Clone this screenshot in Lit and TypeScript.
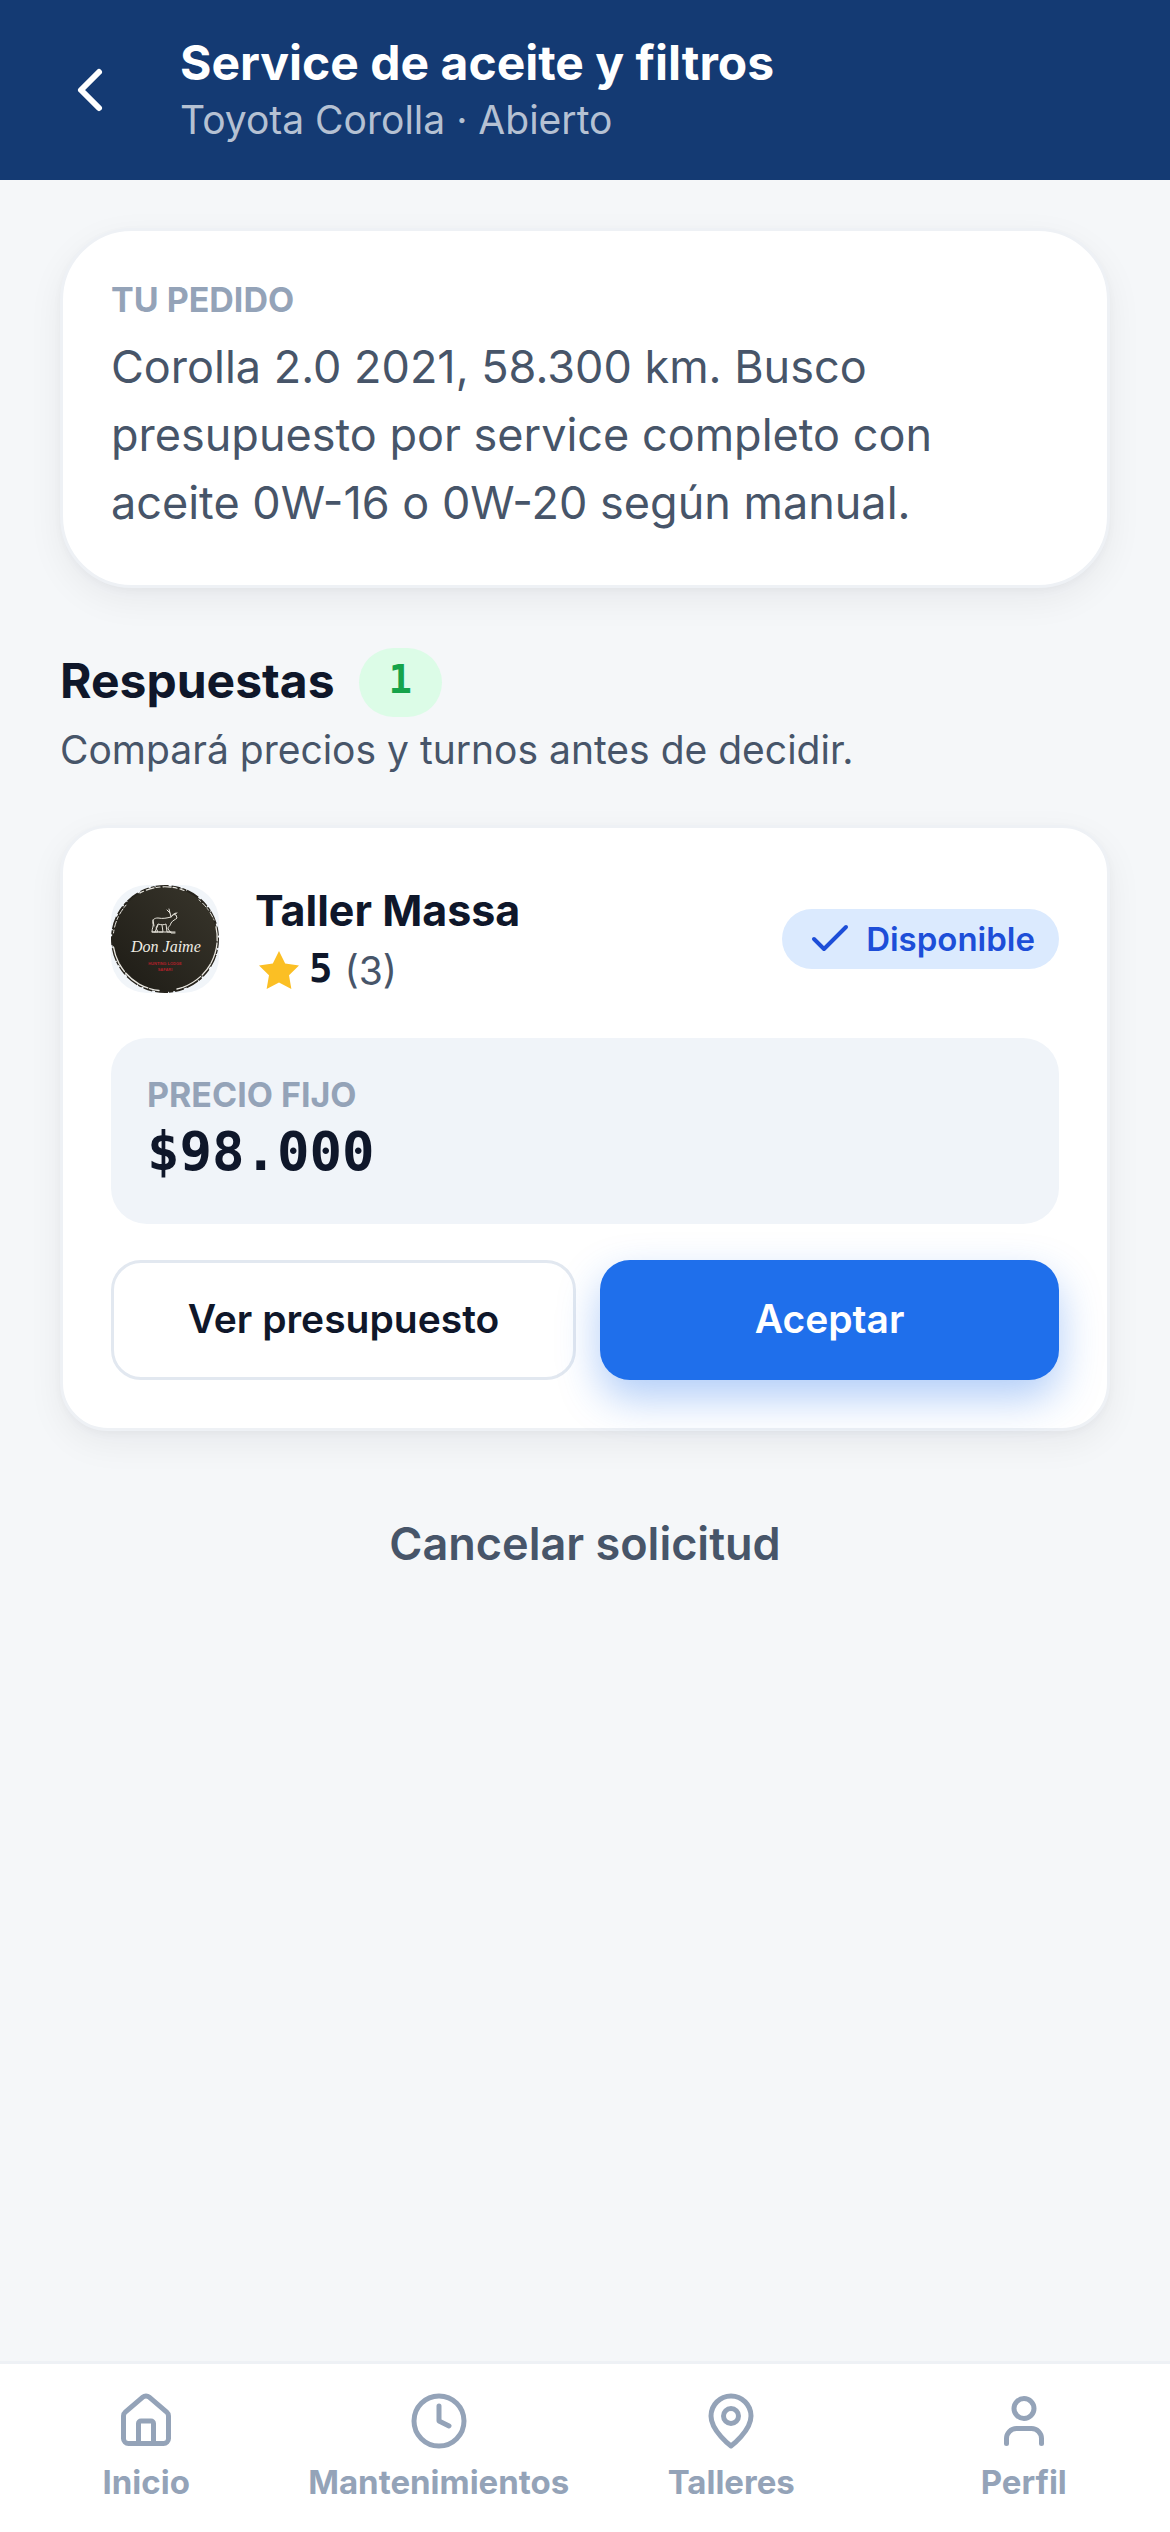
import { LitElement, html, css, svg } from "lit";
import { customElement } from "lit/decorators.js";

const ICONS = {
  back: svg`<path d="M15 6l-6 6 6 6"/>`,
  check: svg`<path d="M20 6L9 17l-5-5"/>`,
  home: svg`<path d="M15 21v-8a1 1 0 0 0-1-1h-4a1 1 0 0 0-1 1v8"/><path d="M3 10a2 2 0 0 1 .709-1.528l7-5.999a2 2 0 0 1 2.582 0l7 5.999A2 2 0 0 1 21 10v9a2 2 0 0 1-2 2H5a2 2 0 0 1-2-2z"/>`,
  clock: svg`<circle cx="12" cy="12" r="10"/><path d="M12 6v6l4 2"/>`,
  pin: svg`<path d="M20 10c0 6-8 12-8 12s-8-6-8-12a8 8 0 0 1 16 0Z"/><circle cx="12" cy="10" r="3"/>`,
  user: svg`<path d="M19 21v-2a4 4 0 0 0-4-4H9a4 4 0 0 0-4 4v2"/><circle cx="12" cy="7" r="4"/>`,
  star: svg`<path d="M12 2l3.090 6.260L22 9.270l-5 4.870 1.180 6.880L12 17.770l-6.180 3.250L7 14.140 2 9.270l6.910-1.010z"/>`,
};

const TABS = [
  { label: "Inicio", icon: ICONS.home },
  { label: "Mantenimientos", icon: ICONS.clock },
  { label: "Talleres", icon: ICONS.pin },
  { label: "Perfil", icon: ICONS.user },
];

const icon = (name: string, content: unknown) =>
  html`<svg class="icon ${name}" viewBox="0 0 24 24" aria-hidden="true">${content}</svg>`;

@customElement("workshop-logo")
class WorkshopLogo extends LitElement {
  static styles = css`
    :host {
      display: block;
      flex: none;
      width: 108px;
      height: 108px;
      border-radius: 36px;
      overflow: hidden;
      background: #f1f5f9;
    }
    .art {
      display: block;
      width: 100%;
      height: 100%;
    }
    .script {
      font: italic 16px "Liberation Serif", serif;
      fill: #efece4;
    }
    .tag {
      font: bold 4px "Liberation Sans", sans-serif;
      fill: #b3202a;
    }
  `;

  render() {
    return html`<svg class="art" viewBox="0 0 108 108" role="img" aria-label="Don Jaime">
      <defs>
        <linearGradient id="disc" x1="0" y1="1" x2="1" y2="0">
          <stop offset="0" stop-color="#1d1b15" />
          <stop offset="1" stop-color="#39362c" />
        </linearGradient>
      </defs>
      <circle cx="54" cy="54" r="53" fill="url(#disc)" />
      <g fill="none" stroke="#26231c" stroke-width="2">
        <circle cx="54" cy="54" r="53" stroke-dasharray="9 2 4 1 13 3" />
      </g>
      <g fill="none" stroke="#e9e7e0" stroke-linecap="round">
        <path d="M2.500 62A52 52 0 0 0 48 105.500" stroke-width="1.400" stroke-dasharray="17 1 9 2" />
        <path d="M105 42A52 52 0 0 1 66 104" stroke-width="1.300" stroke-dasharray="14 2 21 1" />
        <path d="M29 8A52 52 0 0 1 73 5.500" stroke-width="1.200" stroke-dasharray="4 3 8 2" />
        <path d="M2.500 48A52 52 0 0 1 17 18" stroke-width="1" stroke-dasharray="3 3 6 2" />
        <path d="M88 15A52 52 0 0 1 103 35" stroke-width="1" stroke-dasharray="2 3 5 2" />
      </g>
      <g fill="none" stroke="#e6e3da" stroke-width="1" stroke-linecap="round" stroke-linejoin="round">
        <path d="M42 38c-1-3 1-5 5-5 5 1 9 0 13-1 1-2 3-3 5-2l1 3c-2 2-4 2-6 5-1 4-3 3-3 6l3 4h4M42 38c1 3-1 5-1 9h6l-2-4 2-4c3 1 6 1 8 0l1 8h4M42 35l1 6M47 40l-3 7M51 40l1 7h-4M41 47h23" />
        <path d="M60 32l-1-4-3-3M59 28l-1-4M61 31c1-3 3-1 5-3M63 29l2-1" />
      </g>
      <text class="script" x="20" y="67">Don Jaime</text>
      <text class="tag" x="54" y="80" text-anchor="middle">HUNTING LODGE</text>
      <text class="tag" x="54" y="86" text-anchor="middle">SAFARI</text>
    </svg>`;
  }
}

@customElement("app-root")
class AppRoot extends LitElement {
  static styles = css`
    :host {
      display: flex;
      flex-direction: column;
      min-height: 100vh;
      background: #f5f7f9;
      color: #0f172a;
      font-family: Inter, "Liberation Sans", sans-serif;
    }
    h1, h2, h3, p {
      margin: 0;
    }
    button {
      box-sizing: content-box;
      margin: 0;
      border: 0;
      padding: 0;
      background: none;
      color: inherit;
      font: inherit;
      cursor: pointer;
    }
    .icon {
      display: block;
      flex: none;
      fill: none;
      stroke: currentColor;
      stroke-width: 2;
      stroke-linecap: round;
      stroke-linejoin: round;
    }
    .header {
      display: flex;
      align-items: center;
      gap: 24px;
      padding: 33px 24px;
      background: #143a73;
      color: #fff;
    }
    .back {
      display: grid;
      place-items: center;
      width: 132px;
      height: 114px;
    }
    .icon-back {
      width: 72px;
      height: 72px;
    }
    .title {
      font-size: 48px;
      line-height: 60px;
      font-weight: 700;
    }
    .subtitle {
      font-size: 39px;
      line-height: 54px;
      color: rgba(255, 255, 255, 0.7);
    }
    .content {
      flex: 1;
      padding: 48px 60px;
    }
    .card {
      border: 3px solid #eef1f5;
      padding: 48px;
      background: #fff;
      box-shadow: 0 3px 9px rgba(15, 23, 42, 0.03), 0 12px 36px rgba(15, 23, 42, 0.06);
    }
    .request {
      border-radius: 72px;
    }
    .label {
      font-size: 34px;
      line-height: 42px;
      font-weight: 700;
      color: #94a3b8;
    }
    .request-text {
      margin-top: 12px;
      font-size: 45px;
      line-height: 68px;
      color: #475569;
    }
    .section-head {
      display: flex;
      align-items: center;
      gap: 24px;
      margin-top: 60px;
    }
    .section-title {
      padding-bottom: 3px;
      font-size: 48px;
      line-height: 60px;
      font-weight: 700;
    }
    .mono {
      font-family: "DejaVu Sans Mono", "Liberation Mono", monospace;
      font-weight: 700;
    }
    .count {
      padding: 0 30px 6px;
      border-radius: 36px;
      background: #dcfce7;
      color: #16a34a;
      font-size: 39px;
      line-height: 63px;
    }
    .hint {
      margin-top: 3px;
      font-size: 39px;
      line-height: 60px;
      color: #475569;
    }
    .offer {
      margin-top: 45px;
      border-radius: 48px;
    }
    .workshop {
      display: flex;
      align-items: center;
      gap: 36px;
    }
    .workshop-info {
      flex: 1;
      min-width: 0;
      padding-bottom: 6px;
    }
    .workshop-name {
      font-size: 43px;
      line-height: 69px;
      font-weight: 700;
    }
    .rating {
      display: flex;
      align-items: center;
      gap: 6px;
      font-size: 39px;
      line-height: 48px;
    }
    .icon-star {
      width: 48px;
      height: 48px;
      fill: #fbbf24;
      stroke: none;
    }
    .score {
      padding-bottom: 3px;
    }
    .reviews {
      margin-left: 6px;
      color: #475569;
    }
    .status {
      display: flex;
      align-items: center;
      gap: 12px;
      padding: 0 24px;
      border-radius: 30px;
      background: #dbeafe;
      color: #1d4ed8;
      font-size: 33px;
      line-height: 60px;
      font-weight: 600;
    }
    .icon-check {
      width: 48px;
      height: 48px;
    }
    .price {
      margin-top: 36px;
      padding: 36px;
      border-radius: 36px;
      background: #f0f4f9;
    }
    .amount {
      font-size: 54px;
      line-height: 72px;
    }
    .actions {
      display: flex;
      gap: 24px;
      margin-top: 36px;
    }
    .action {
      flex: 1;
      padding-bottom: 3px;
      border-radius: 30px;
      font-size: 39px;
      line-height: 117px;
      font-weight: 600;
    }
    .action-outline {
      border: 3px solid #e2e8f0;
      line-height: 111px;
    }
    .action-primary {
      background: #1f6feb;
      color: #fff;
      box-shadow: 0 18px 42px rgba(31, 111, 235, 0.35);
    }
    .cancel {
      display: block;
      width: 100%;
      margin-top: 36px;
      color: #475569;
      font-size: 45px;
      line-height: 153px;
      font-weight: 600;
    }
    .tabs {
      display: grid;
      grid-template-columns: repeat(4, 1fr);
      padding: 27px 0 24px;
      border-top: 3px solid #eef1f5;
      background: #fff;
    }
    .tab {
      display: flex;
      flex-direction: column;
      align-items: center;
      gap: 6px;
      color: #94a3b8;
      font-size: 33px;
      line-height: 51px;
      font-weight: 700;
      text-decoration: none;
    }
    .icon-tab {
      width: 60px;
      height: 60px;
    }
  `;

  render() {
    return html`
      <header class="header">
        <button class="back" aria-label="Volver">${icon("icon-back", ICONS.back)}</button>
        <div>
          <h1 class="title">Service de aceite y filtros</h1>
          <p class="subtitle">Toyota Corolla · Abierto</p>
        </div>
      </header>

      <main class="content">
        <section class="card request">
          <h2 class="label">TU PEDIDO</h2>
          <p class="request-text">
            Corolla 2.0 2021, 58.300 km. Busco presupuesto por service completo con aceite 0W-16 o
            0W-20 según manual.
          </p>
        </section>

        <div class="section-head">
          <h2 class="section-title">Respuestas</h2>
          <span class="count mono">1</span>
        </div>
        <p class="hint">Compará precios y turnos antes de decidir.</p>

        <article class="card offer">
          <div class="workshop">
            <workshop-logo></workshop-logo>
            <div class="workshop-info">
              <h3 class="workshop-name">Taller Massa</h3>
              <div class="rating">
                ${icon("icon-star", ICONS.star)}
                <span class="score mono">5</span>
                <span class="reviews">(3)</span>
              </div>
            </div>
            <span class="status">${icon("icon-check", ICONS.check)}Disponible</span>
          </div>
          <div class="price">
            <p class="label">PRECIO FIJO</p>
            <p class="amount mono">$98.000</p>
          </div>
          <div class="actions">
            <button class="action action-outline">Ver presupuesto</button>
            <button class="action action-primary">Aceptar</button>
          </div>
        </article>

        <button class="cancel">Cancelar solicitud</button>
      </main>

      <nav class="tabs">
        ${TABS.map((tab) => html`<a class="tab" href="#">${icon("icon-tab", tab.icon)}<span>${tab.label}</span></a>`)}
      </nav>
    `;
  }
}
